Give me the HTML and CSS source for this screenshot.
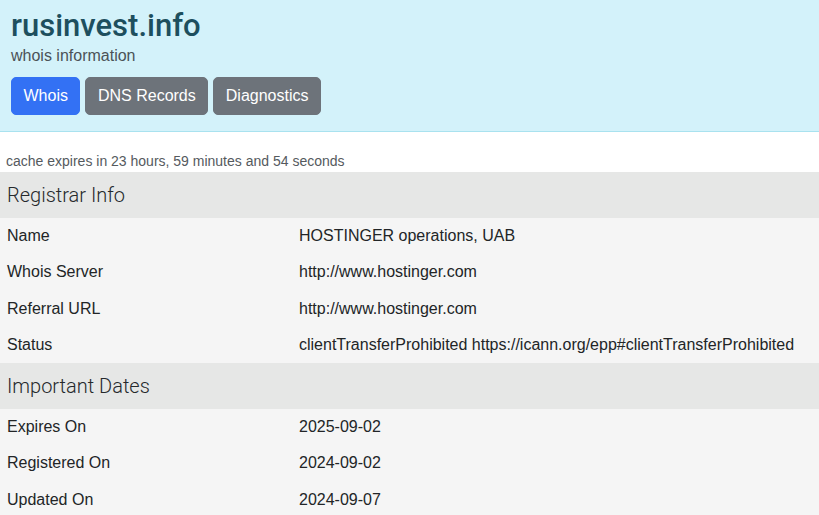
FILE: index.html
```html
<!DOCTYPE html>
<html lang="en">
<head>
<meta charset="utf-8">
<title>rusinvest.info whois</title>
<link rel="stylesheet" href="styles.css">
</head>
<body>
<header class="hero">
  <h1 class="title">rusinvest.info</h1>
  <p class="subtitle">whois information</p>
  <nav class="tabs">
    <a class="btn btn-primary" href="#">Whois</a>
    <a class="btn btn-secondary" href="#">DNS Records</a>
    <a class="btn btn-secondary" href="#">Diagnostics</a>
  </nav>
</header>
<main class="content">
  <p class="cache">cache expires in 23 hours, 59 minutes and 54 seconds</p>
  <table class="info">
    <tbody>
      <tr class="section"><th colspan="2">Registrar Info</th></tr>
      <tr><td class="key">Name</td><td>HOSTINGER operations, UAB</td></tr>
      <tr><td class="key">Whois Server</td><td>http://www.hostinger.com</td></tr>
      <tr><td class="key">Referral URL</td><td>http://www.hostinger.com</td></tr>
      <tr><td class="key">Status</td><td>clientTransferProhibited https://icann.org/epp#clientTransferProhibited</td></tr>
      <tr class="section"><th colspan="2">Important Dates</th></tr>
      <tr><td class="key">Expires On</td><td>2025-09-02</td></tr>
      <tr><td class="key">Registered On</td><td>2024-09-02</td></tr>
      <tr><td class="key">Updated On</td><td>2024-09-07</td></tr>
    </tbody>
  </table>
</main>
</body>
</html>
```

FILE: styles.css
```css
* { box-sizing: border-box; }

html, body {
  margin: 0;
  padding: 0;
  background: #ffffff;
  font-family: "Liberation Sans", Arial, sans-serif;
  color: #212529;
  font-size: 16px;
  line-height: 1.5;
}

.hero {
  background: #d3f2fa;
  border-bottom: 1px solid #a9e2ef;
  padding: 8px 11px 16px;
  display: flex;
  flex-direction: column;
  align-items: flex-start;
}

.title {
  margin: 0;
  font-family: Roboto, "Liberation Sans", sans-serif;
  font-size: 31px;
  line-height: 36px;
  font-weight: 500;
  color: #1d4f5e;
}

.subtitle {
  margin: 0;
  font-size: 16px;
  line-height: 24px;
  color: #4b5257;
}

.tabs {
  display: flex;
  gap: 5px;
  margin-top: 9px;
}

.btn {
  display: inline-block;
  padding: 6px 11.5px;
  border: 1px solid transparent;
  border-radius: 5px;
  font-size: 16px;
  line-height: 24px;
  color: #ffffff;
  text-decoration: none;
}

.btn-primary {
  background: #3371f4;
  border-color: #3371f4;
}

.btn-secondary {
  background: #6d737a;
  border-color: #6d737a;
}

.content {
  padding-top: 19px;
}

.cache {
  margin: 0;
  padding: 0 6px;
  font-size: 14px;
  line-height: 21px;
  color: #555a5e;
}

.info {
  width: 100%;
  border-collapse: collapse;
}

.info th,
.info td {
  text-align: left;
  vertical-align: top;
}

.section th {
  background: #e6e7e6;
  padding: 8px 7px;
  font-family: Roboto, "Liberation Sans", sans-serif;
  font-size: 20px;
  line-height: 30px;
  font-weight: 300;
  color: #25292c;
}

.info td {
  background: #f5f5f5;
  padding: 6px 7px 6.25px;
  font-size: 16px;
  line-height: 24px;
  color: #222527;
  white-space: nowrap;
}

.info td.key {
  width: 292px;
}
```
